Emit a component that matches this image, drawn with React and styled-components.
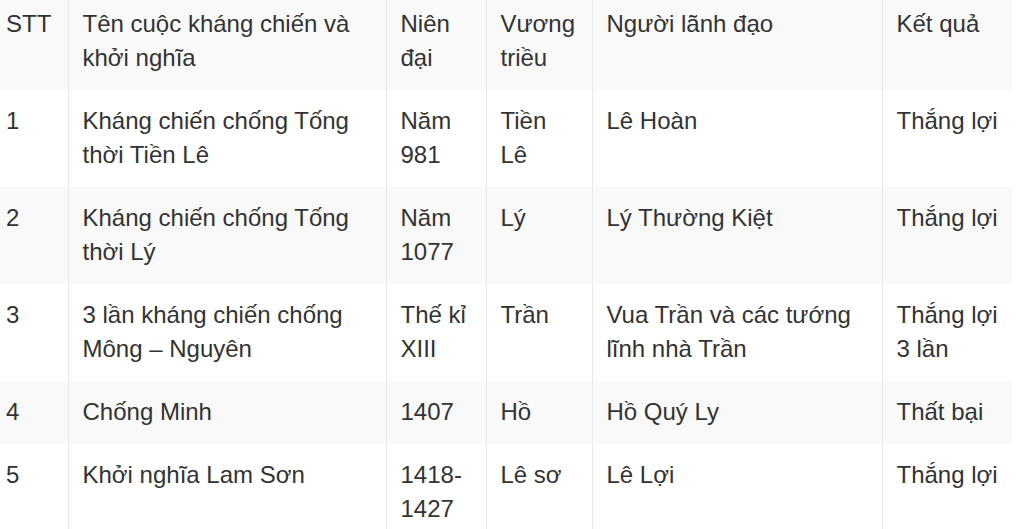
import React from "react";
import styled, { createGlobalStyle } from "styled-components";

const Global = createGlobalStyle`
  html, body { margin: 0; padding: 0; background: #fff; overflow: hidden; }
  body { font-family: "Liberation Sans", Arial, sans-serif; }
`;

const Page = styled.div`
  width: 1024px;
  height: 529px;
  overflow: hidden;
  background: #fff;
`;

const Table = styled.table`
  width: 1020px;
  margin: -7px 0 0 -8px;
  border-collapse: collapse;
  table-layout: fixed;
  font-family: "Liberation Sans", Arial, sans-serif;
  font-size: 24px;
  line-height: 34px;
  color: #333;
`;

const Row = styled.tr`
  background: ${(p) => (p.$striped ? "#f9f9f9" : "#ffffff")};
`;

const Cell = styled.td`
  padding: 14px 14px 15px 14px;
  vertical-align: top;
  text-align: left;
  font-weight: normal;
  border-left: 1px solid #e9e9e9;
  &:first-child { border-left: none; }
  &:last-child { padding-right: 6px; }
`;

const Head = styled(Cell).attrs({ as: "th" })``;

const widths = [76, 318, 100, 106, 290, 130];

const header = ["STT", "Tên cuộc kháng chiến và khởi nghĩa", "Niên đại", "Vương triều", "Người lãnh đạo", "Kết quả"];

const rows = [
  ["1", "Kháng chiến chống Tống thời Tiền Lê", "Năm 981", "Tiền Lê", "Lê Hoàn", "Thắng lợi"],
  ["2", "Kháng chiến chống Tống thời Lý", "Năm 1077", "Lý", "Lý Thường Kiệt", "Thắng lợi"],
  ["3", "3 lần kháng chiến chống Mông – Nguyên", "Thế kỉ XIII", "Trần", "Vua Trần và các tướng lĩnh nhà Trần", "Thắng lợi 3 lần"],
  ["4", "Chống Minh", "1407", "Hồ", "Hồ Quý Ly", "Thất bại"],
  ["5", "Khởi nghĩa Lam Sơn", "1418-1427", "Lê sơ", "Lê Lợi", "Thắng lợi"],
];

export default function App() {
  return (
    <Page>
      <Global />
      <Table>
        <colgroup>
          {widths.map((w, i) => (
            <col key={i} style={{ width: w }} />
          ))}
        </colgroup>
        <thead>
          <Row $striped>
            {header.map((h, i) => (
              <Head key={i}>{h}</Head>
            ))}
          </Row>
        </thead>
        <tbody>
          {rows.map((r, i) => (
            <Row key={i} $striped={i % 2 === 1}>
              {r.map((c, j) => (
                <Cell key={j}>{c}</Cell>
              ))}
            </Row>
          ))}
        </tbody>
      </Table>
    </Page>
  );
}
